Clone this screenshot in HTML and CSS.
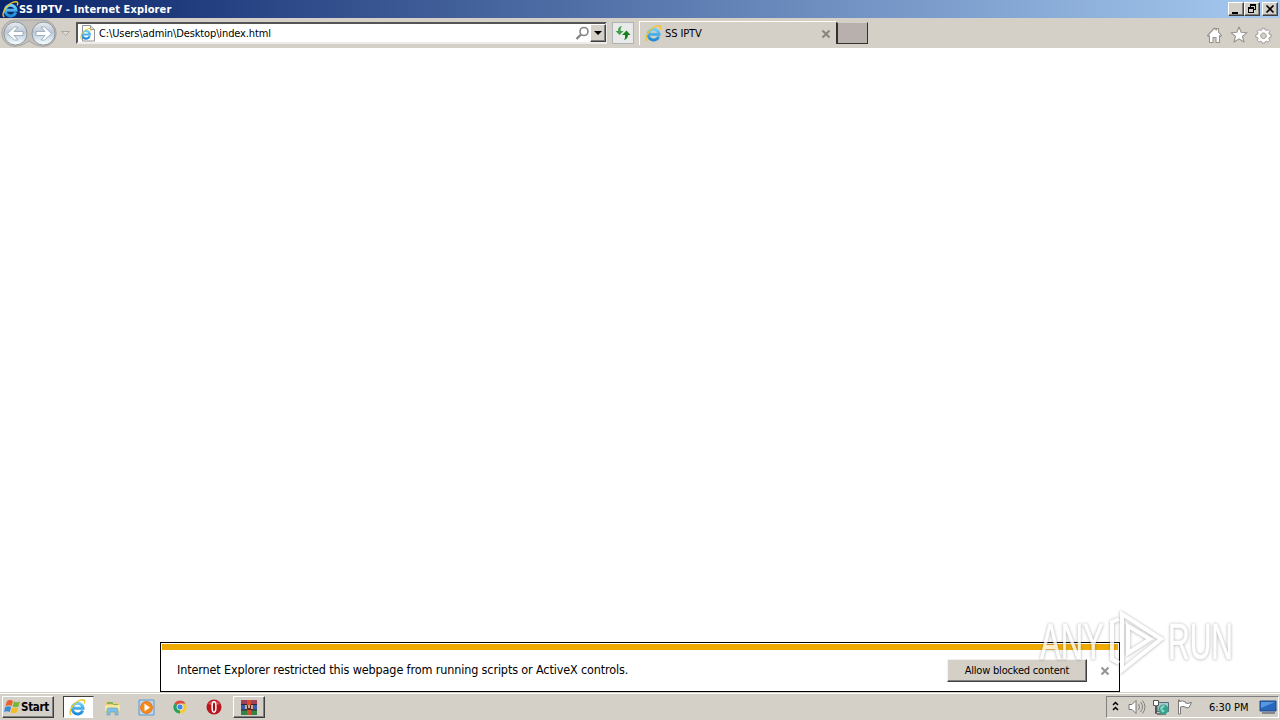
FILE: index.html
```
<!DOCTYPE html>
<html lang="en">

<head>
  <meta charset="UTF-8" />
  <title>SS IPTV</title>
  <link rel="stylesheet" href="styles.css">
</head>

<body>

  <!-- Shared icons -->
  <svg class="defs" width="0" height="0">
    <defs>
      <linearGradient id="blue" x1="0" y1="0" x2="0" y2="1">
        <stop offset="0" stop-color="#6fd0f7" />
        <stop offset="1" stop-color="#1c8ad6" />
      </linearGradient>
      <linearGradient id="glass" x1="0" y1="0" x2="0" y2="1">
        <stop offset="0" stop-color="#e9edf1" />
        <stop offset="0.45" stop-color="#bcc8d5" />
        <stop offset="0.75" stop-color="#dbe8f1" />
        <stop offset="1" stop-color="#fbffff" />
      </linearGradient>
      <symbol id="ie" viewBox="0 0 16 16">
        <path d="M12.900 10.800A5.100 5.100 0 1 1 13.200 8.700H4.200" fill="none" stroke="url(#blue)" stroke-width="2.800" />
        <path d="M2.200 14.800C-.2 14 1.200 9 4.600 5.200 8.500 1 13.500-.4 14.700 1.600 15 2.400 14.700 3.400 14.300 4.200" fill="none" stroke="#edc52e" stroke-width="1.300" />
      </symbol>
    </defs>
  </svg>

  <div class="titlebar">
    <svg class="title-icon" width="17" height="17"><use href="#ie" /></svg>
    <span class="title">SS IPTV - Internet Explorer</span>
    <div class="window-buttons">
      <span class="win-btn"><svg width="14" height="12"><path d="M3 9h6v2H3z" /></svg></span>
      <span class="win-btn"><svg width="14" height="12"><path d="M5 1h6v6H9V6h1V3H6v1H5zM3 4h6v6H3zM4 6v3h4V6z" fill-rule="evenodd" /></svg></span>
      <span class="win-btn close"><svg width="14" height="12"><path d="M3.500 2.500l7 7M10.500 2.500l-7 7" stroke="#000" stroke-width="1.700" /></svg></span>
    </div>
  </div>

  <div class="navbar">
    <svg class="nav-arrows" width="74" height="30" viewBox="0 0 74 30">
      <path d="M15 2H43A13 13 0 0 1 43 28.500Q35 28 29 23Q23 28 15 28.500A13 13 0 0 1 15 2Z" fill="#c3c0bc" stroke="#aaa7a3" />
      <g fill="url(#glass)" stroke="#8e979f">
        <circle cx="15.500" cy="15.500" r="11.500" />
        <circle cx="43.500" cy="15.500" r="11.500" />
      </g>
      <g fill="#fff" stroke="#91a3b5" stroke-width=".8">
        <path d="M7.500 15.500l7-6.500h3.500l-4 4.500h9v4h-9l4 4.500h-3.500z" />
        <path d="M51.500 15.500l-7-6.500H41l4 4.500h-9v4h9l-4 4.500h3.500z" />
      </g>
      <path d="M61.500 13.500h8l-4 4z" fill="#dedbd5" stroke="#aaa8a3" />
    </svg>

    <div class="address">
      <svg width="17" height="17" viewBox="0 0 17 17">
        <path d="M3.500 .500h8l4 4v11.500h-12z" fill="#fff" stroke="#929292" />
        <path d="M11.500 .500v4h4" fill="#ddd" stroke="#929292" />
        <use href="#ie" x="1" y="3" width="12" height="12" />
      </svg>
      <span class="url">C:\Users\admin\Desktop\index.html</span>
      <svg class="search" width="15" height="15" viewBox="0 0 15 15">
        <circle cx="9" cy="5.500" r="4" fill="none" stroke="#858585" stroke-width="1.600" />
        <path d="M6 8.500l-4.500 4.500" stroke="#858585" stroke-width="2.400" />
      </svg>
      <span class="drop"><svg width="12" height="14"><path d="M2 5h8L6 9z" /></svg></span>
    </div>

    <span class="refresh">
      <svg width="20" height="20" viewBox="0 0 20 20">
        <path d="M9 3Q5 3.500 5 8H2.500l4 4 4-4H7.500Q7 5 9 3z" fill="#3f9f48" />
        <path d="M11 17Q15 16 15 12h2.500l-4-4.500-4.500 4.500h3Q12.500 15 11 17z" fill="#168020" />
      </svg>
    </span>

    <div class="tab">
      <svg width="17" height="17"><use href="#ie" /></svg>
      <span class="tab-title">SS IPTV</span>
      <svg class="tab-close" width="10" height="10"><path d="M1.500 1.500l7 7M8.500 1.500l-7 7" stroke="#88857f" stroke-width="2" /></svg>
    </div>
    <span class="new-tab"></span>

    <svg class="tools" width="70" height="20" viewBox="0 0 70 20">
      <g fill="#fff" stroke="#96938e" stroke-width="1.100" stroke-linejoin="round">
        <path d="M1.500 10.500l7-7.500 2 2V3.500h2v3.700l3 3.300-1.200 1-.8-.8v6.800H10v-5H7v5H3.500v-6.800l-.8.800z" />
        <path d="M33 2l2.200 5.300 5.800.4-4.500 3.700 1.500 5.600-5-3.100-5 3.100 1.500-5.600L25 7.700l5.800-.4z" />
        <path fill-rule="evenodd" transform="translate(8.600 1.600) scale(.85)" d="M56 2h3l.5 2 1.500.6 1.800-1.100 2.100 2.100L63.800 7.500l.6 1.400 2.100.5v3l-2.100.5-.6 1.400 1.100 1.900-2.100 2.100-1.800-1.100-1.500.6-.5 1.700h-3l-.5-1.700-1.500-.6-1.800 1.100-2.100-2.100 1.100-1.900-.6-1.400-2.100-.5v-3l2.100-.5.600-1.400-1.100-1.900 2.100-2.100L54 4.600l1.500-.6zM57.500 7.500a3.300 3.300 0 1 0 .01 0z" />
      </g>
    </svg>
  </div>

  <div class="page">
    <div class="notification">
      <div class="stripe"></div>
      <div class="notification-body">
        <span class="message">Internet Explorer restricted this webpage from running scripts or ActiveX controls.</span>
        <button class="allow"><span>Allow blocked content</span></button>
        <svg class="dismiss" width="10" height="10"><path d="M1.500 1.500l7 7M8.500 1.500l-7 7" stroke="#96938f" stroke-width="2" /></svg>
      </div>
    </div>
  </div>

  <div class="taskbar">
    <button class="start">
      <svg width="17" height="16" viewBox="0 0 17 16">
        <path d="M3 2Q6 0 9 2L7.500 7Q5 5.500 1.500 7z" fill="#e8612c" />
        <path d="M10 2.500Q13 4 16 2.500L14.500 7.500Q12 9 8.500 7.500z" fill="#78b638" />
        <path d="M1.200 8Q4.500 6.500 7.200 8L5.700 13Q3 11.500 0 13z" fill="#3a8bd4" />
        <path d="M8.200 8.500Q11 10 14.200 8.500L12.700 13.500Q9.500 15 6.700 13.500z" fill="#f5bd22" />
      </svg>
      <span>Start</span>
    </button>

    <div class="apps">
      <span class="app active"><svg width="17" height="17"><use href="#ie" /></svg></span>
      <span class="app">
        <svg width="17" height="17" viewBox="0 0 17 17">
          <path d="M1 3l5-1 1 2h8v10H1z" fill="#edcf70" />
          <path d="M3 4h6M9 6h5" stroke="#65a957" stroke-width="1.500" />
          <path d="M1 6h15v6H1z" fill="#f7e6a0" />
          <path d="M3 16v-5q0-2 2-2h7q2 0 2 2v5h-3v-3H6v3z" fill="#7ebfe5" stroke="#579fc9" stroke-width=".6" />
        </svg>
      </span>
      <span class="app">
        <svg width="17" height="17" viewBox="0 0 17 17">
          <path d="M1 1h15v15H1z" fill="#b9d6f1" stroke="#5f98ca" />
          <circle cx="8.500" cy="8.500" r="5.900" fill="#f58a1d" stroke="#ee7012" />
          <path d="M6.500 4.800v7.400l5.500-3.700z" fill="#fff" />
        </svg>
      </span>
      <span class="app">
        <svg width="14" height="14" viewBox="0 0 16 16">
          <path d="M8 8L1.500 4.200A7.500 7.500 0 0 1 14.500 4.200H8z" fill="#dd4b3e" />
          <path d="M8 8V4.200h6.500A7.500 7.500 0 0 1 8 15.500z" fill="#f7cb32" />
          <path d="M8 8v7.500A7.500 7.500 0 0 1 1.500 4.200z" fill="#26a35a" />
          <circle cx="8" cy="8" r="3.500" fill="#4486e8" stroke="#eee" />
        </svg>
      </span>
      <span class="app">
        <svg width="16" height="16" viewBox="0 0 16 16">
          <circle cx="8" cy="8" r="7.500" fill="#b9151c" />
          <path d="M2 5Q8-2 14 5Q8 7 2 5z" fill="#dd5558" />
          <ellipse cx="8" cy="8" rx="1.900" ry="5.200" fill="#a01015" stroke="#fff" stroke-width="1.500" />
        </svg>
      </span>
      <span class="app raised">
        <svg width="18" height="17" viewBox="0 0 18 17">
          <path d="M1 1h16v5H1z" fill="#a33f58" />
          <path d="M1 6h16v5H1z" fill="#385bad" />
          <path d="M1 11h16v5H1z" fill="#338342" />
          <path d="M1 5.500h16M1 11h16" stroke="#342731" />
          <path d="M7 1h4v15H7z" fill="#d84b2b" />
          <path d="M5 6h8v5H5z" fill="#612724" />
          <path d="M6 6v4M9 6v3M12 6v4" stroke="#f3e4b9" stroke-width="1.400" />
        </svg>
      </span>
    </div>

    <div class="tray">
      <svg class="chevrons" width="7" height="11" viewBox="0 0 7 11"><path d="M1 4l2.500-2.500L6 4M1 9l2.500-2.500L6 9" fill="none" stroke="#000" stroke-width="1.500" /></svg>
      <svg class="speaker" width="18" height="16" viewBox="0 0 18 16">
        <path d="M1 5.500h3l4-4v13l-4-4H1z" fill="#fff" stroke="#777" />
        <path d="M10.500 5q2 3 0 6M12.500 3q4 5 0 10M14.500 1.500q5 6.500 0 13" fill="none" stroke="#85827d" />
      </svg>
      <svg class="network" width="17" height="17" viewBox="0 0 17 17">
        <path d="M4 3.500h11.500v9H4z" fill="#a9c9d0" stroke="#596d73" />
        <path d="M4 15h9" stroke="#777" stroke-width="2" />
        <path d="M.500 1.500h5v5h-2v8h-1v-8h-2z" fill="#fff" stroke="#555" />
        <circle cx="10.500" cy="10.500" r="5" fill="#38a18f" />
        <path d="M7 9q3-4 5-2l-3 3 3 2q-2 2-3 1z" fill="#8bdac4" />
      </svg>
      <svg class="flag" width="18" height="16" viewBox="0 0 18 16">
        <path d="M3.500 2.500q3-1.500 6 .5v1q2 1 6-.5l-2.500 5q-2 1-4-.5-2-1-4.500 0V15h-2V1h1z" fill="#fff" stroke="#777" />
      </svg>
      <span class="clock">6:30 PM</span>
      <svg class="monitor" width="18" height="16" viewBox="0 0 18 16">
        <path d="M1 2h16v10H1z" fill="#2767bc" stroke="#234b85" />
        <path d="M2 3h14L2 9z" fill="#5799e0" />
        <path d="M3 14h9M12 14h4" stroke="#353f52" />
      </svg>
    </div>
  </div>

  <!-- Watermark over the page -->
  <svg class="watermark" width="236" height="80" viewBox="0 0 236 80">
    <path d="M85 16L78 19V56L85 60M88 11V67L127 36zM94 23V50L116 36z" />
    <text transform="translate(6 56) scale(.62 1)">ANY</text>
    <text transform="translate(134 56) scale(.6 1)">RUN</text>
  </svg>

</body>

</html>
```
FILE: styles.css
```
* {
  margin: 0;
  padding: 0;
  box-sizing: border-box;
}

body {
  width: 1280px;
  height: 720px;
  display: flex;
  flex-direction: column;
  overflow: hidden;
  position: relative;
  background: #fff;
  color: #000;
  font-family: "DejaVu Sans Condensed", "DejaVu Sans", sans-serif;
  font-stretch: condensed;
  font-size: 11px;
}

svg {
  display: block;
  flex: none;
}

span {
  white-space: nowrap;
}

.defs {
  position: absolute;
}

.titlebar {
  height: 18px;
  flex: none;
  display: flex;
  align-items: center;
  padding: 0 2px;
  background: linear-gradient(to right, #0a246a, #a6caf0);
}

.title {
  color: #fff;
  font-weight: bold;
  font-size: 11px;
  letter-spacing: 0.11px;
}

.window-buttons {
  display: flex;
  margin-left: auto;
}

.win-btn {
  width: 16px;
  height: 14px;
  background: #d4d0c8;
  border: 1px solid;
  border-color: #fff #404040 #404040 #fff;
  box-shadow: inset -1px -1px #808080;
}

.close {
  margin-left: 2px;
}

.navbar {
  height: 30px;
  flex: none;
  display: flex;
  align-items: center;
  background: #d4d0c8;
}

.address {
  width: 531px;
  height: 22px;
  margin-left: 2px;
  display: flex;
  align-items: center;
  padding-left: 1px;
  background: #fff;
  border: 2px solid;
  border-color: #555 #eeece8 #eeece8 #555;
}

.url {
  margin-left: 3px;
  padding-top: 1px;
  font-size: 11px;
  letter-spacing: -0.12px;
}

.search {
  margin-left: auto;
}

.drop {
  width: 16px;
  height: 18px;
  margin-right: -1px;
  padding-top: 1px;
  padding-left: 1px;
  background: #d4d0c8;
  border: 1px solid;
  border-color: #fff #404040 #404040 #fff;
  box-shadow: inset -1px -1px #808080;
}

.refresh {
  width: 22px;
  height: 22px;
  margin-left: 5px;
  background: #e8eae9;
  border: 1px solid #b0b3b3;
}

.tab {
  width: 197px;
  height: 24px;
  margin-left: 5px;
  padding: 0 5px 0 5px;
  display: flex;
  align-items: center;
  border-top: 1px solid #fff;
  border-left: 1px solid #fff;
}

.tab-title {
  margin-left: 3px;
  letter-spacing: -0.1px;
}

.tab-close {
  margin-left: auto;
}

.new-tab {
  width: 32px;
  height: 22px;
  background: #b8b0ac;
  border: 1px solid #34302d;
  border-top-color: #d4d0c8;
  border-left-width: 2px;
}

.tools {
  margin-left: auto;
  margin-right: 4px;
  margin-top: 4px;
}

.page {
  flex: 1;
  display: flex;
  align-items: flex-end;
  justify-content: center;
}

.notification {
  width: 960px;
  height: 50px;
  border: 1px solid #000;
  padding: 1px;
}

.stripe {
  height: 6px;
  background: #f0ab00;
}

.notification-body {
  height: 40px;
  display: flex;
  align-items: center;
  padding: 0 8px 0 15px;
}

.message {
  padding-bottom: 2px;
  font-size: 12.500px;
  letter-spacing: -0.13px;
}

.allow {
  width: 140px;
  height: 23px;
  margin-left: auto;
  margin-right: 13px;
  padding-top: 1px;
  background: #d4d0c8;
  border: 1px solid;
  border-color: #f4f2ee #404040 #404040 #f4f2ee;
  box-shadow: inset -1px -1px #808080;
  font: inherit;
  letter-spacing: -0.2px;
}

.dismiss {
  margin-top: 2px;
}

.taskbar {
  height: 28px;
  flex: none;
  display: flex;
  align-items: center;
  padding: 2px 1px 0 2px;
  background: #d4d0c8;
  box-shadow: inset 0 1px #d4d0c8, inset 0 2px #fff;
}

.start {
  width: 52px;
  height: 22px;
  display: flex;
  align-items: center;
  background: #d4d0c8;
  border: 1px solid;
  border-color: #fff #404040 #404040 #fff;
  box-shadow: inset -1px -1px #808080;
  padding-left: 1px;
  font: inherit;
  font-size: 11.500px;
  font-weight: bold;
  letter-spacing: -0.3px;
}

.apps {
  display: flex;
  margin-left: 9px;
}

.app {
  width: 32px;
  height: 22px;
  margin-right: 2px;
  display: flex;
  align-items: center;
  justify-content: center;
}

.active {
  width: 31px;
  padding-right: 2px;
  background: #fff;
  border: 1px solid;
  border-color: #404040 #d4d0c8 #fff #404040;
}

.raised {
  margin-left: 1px;
  border: 1px solid;
  border-color: #fff #404040 #404040 #fff;
  box-shadow: inset -1px -1px #808080;
}

.tray {
  width: 173px;
  height: 22px;
  margin-left: auto;
  display: flex;
  align-items: center;
  padding: 0 1px 0 5px;
  border: 1px solid;
  border-color: #808080 #fff #fff #808080;
}

.chevrons {
  margin-bottom: 1px;
}

.speaker {
  margin-left: 9px;
}

.network {
  margin-left: 7px;
}

.flag {
  margin-left: 6px;
}

.clock {
  margin-left: 15px;
  letter-spacing: -0.05px;
}

.monitor {
  margin-left: auto;
}

.watermark {
  position: absolute;
  left: 1034px;
  top: 603px;
  opacity: 0.8;
  fill: none;
  stroke: #fff;
  stroke-width: 4px;
  filter: drop-shadow(0 0 1.5px rgba(80, 80, 80, 0.45)) drop-shadow(0 1px 1px rgba(80, 80, 80, 0.15));
  font-family: "Liberation Sans", sans-serif;
  font-stretch: normal;
  font-size: 50px;
}

.watermark text {
  fill: #fff;
  stroke-width: 0.6px;
}
```
